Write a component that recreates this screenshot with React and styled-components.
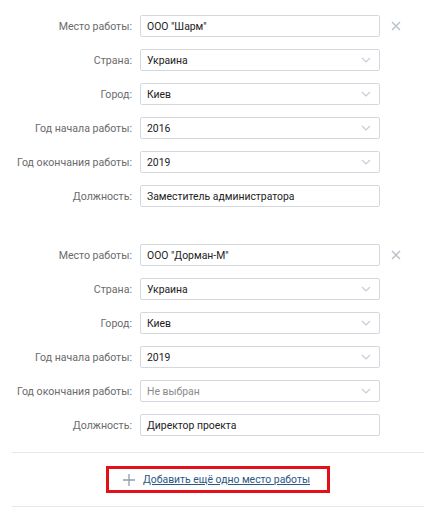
import styled, { createGlobalStyle } from "styled-components";

const GlobalStyle = createGlobalStyle`
  body {
    margin: 0;
    background: #fff;
    font-family: Roboto, "Open Sans", "DejaVu Sans", sans-serif;
  }
`;

const jobs = [
  {
    place: 'ООО "Шарм"',
    country: "Украина",
    city: "Киев",
    start: "2016",
    end: "2019",
    position: "Заместитель администратора",
  },
  {
    place: 'ООО "Дорман-М"',
    country: "Украина",
    city: "Киев",
    start: "2019",
    end: null,
    position: "Директор проекта",
  },
];

const Chevron = () => (
  <svg width="10" height="6" viewBox="0 0 10 6">
    <path d="M1 1l4 4 4-4" fill="none" stroke="#c5cdd6" strokeWidth="1.2" />
  </svg>
);

const Cross = () => (
  <svg width="10" height="10" viewBox="0 0 10 10">
    <path d="M1 1l8 8M9 1l-8 8" stroke="#b8c0c9" strokeWidth="1.4" />
  </svg>
);

const Plus = () => (
  <svg width="12" height="12" viewBox="0 0 12 12">
    <path d="M6 0v12M0 6h12" stroke="#8f9dad" strokeWidth="1.3" />
  </svg>
);

const Field = ({ label, value, select, placeholder, removable }) => (
  <Row>
    <Label>{label}</Label>
    <Box $select={select}>
      <Value $muted={placeholder}>{value}</Value>
      {select && <Chevron />}
    </Box>
    <Remove>{removable && <Cross />}</Remove>
  </Row>
);

const Job = ({ job }) => (
  <Block>
    <Field label="Место работы:" value={job.place} removable />
    <Field label="Страна:" value={job.country} select />
    <Field label="Город:" value={job.city} select />
    <Field label="Год начала работы:" value={job.start} select />
    <Field
      label="Год окончания работы:"
      value={job.end || "Не выбран"}
      placeholder={!job.end}
      select
    />
    <Field label="Должность:" value={job.position} />
  </Block>
);

const App = () => (
  <>
    <GlobalStyle />
    <Page>
      <Jobs>
        {jobs.map((job, i) => (
          <Job key={i} job={job} />
        ))}
      </Jobs>
      <Footer>
        <AddButton href="#">
          <Plus />
          <span>Добавить ещё одно место работы</span>
        </AddButton>
      </Footer>
    </Page>
  </>
);

export default App;

const Page = styled.div`
  width: 436px;
  height: 508px;
  padding: 15px 12px 0;
  box-sizing: border-box;
  overflow: hidden;
`;

const Jobs = styled.div`
  display: flex;
  flex-direction: column;
  gap: 37px;
  padding-bottom: 16px;
  border-bottom: 1px solid #e7e8ec;
`;

const Block = styled.div`
  display: flex;
  flex-direction: column;
  gap: 12px;
`;

const Row = styled.div`
  display: flex;
  align-items: center;
  height: 22px;
`;

const Label = styled.div`
  width: 120px;
  text-align: right;
  padding-right: 8px;
  font-size: 10.6px;
  color: #6b6b6b;
  white-space: nowrap;
`;

const Box = styled.div`
  width: 240px;
  height: 22px;
  box-sizing: border-box;
  border: 1px solid #d3d9de;
  border-radius: 2px;
  display: flex;
  align-items: center;
  justify-content: space-between;
  padding: 0 8px 0 6px;
  font-size: 10.4px;
`;

const Value = styled.span`
  color: ${(p) => (p.$muted ? "#8a8a8a" : "#222")};
`;

const Remove = styled.div`
  width: 28px;
  display: flex;
  justify-content: center;
  padding-left: 2px;
`;

const Footer = styled.div`
  display: flex;
  justify-content: center;
  padding: 13px 0 13px;
  border-bottom: 1px solid #e7e8ec;
`;

const AddButton = styled.a`
  display: flex;
  align-items: center;
  gap: 8px;
  height: 27px;
  box-sizing: border-box;
  padding: 0 17px 0 14px;
  border: 3px solid #e3101a;
  font-size: 10.4px;
  color: #2a5885;
  text-decoration: none;

  span {
    text-decoration: underline;
  }
`;
